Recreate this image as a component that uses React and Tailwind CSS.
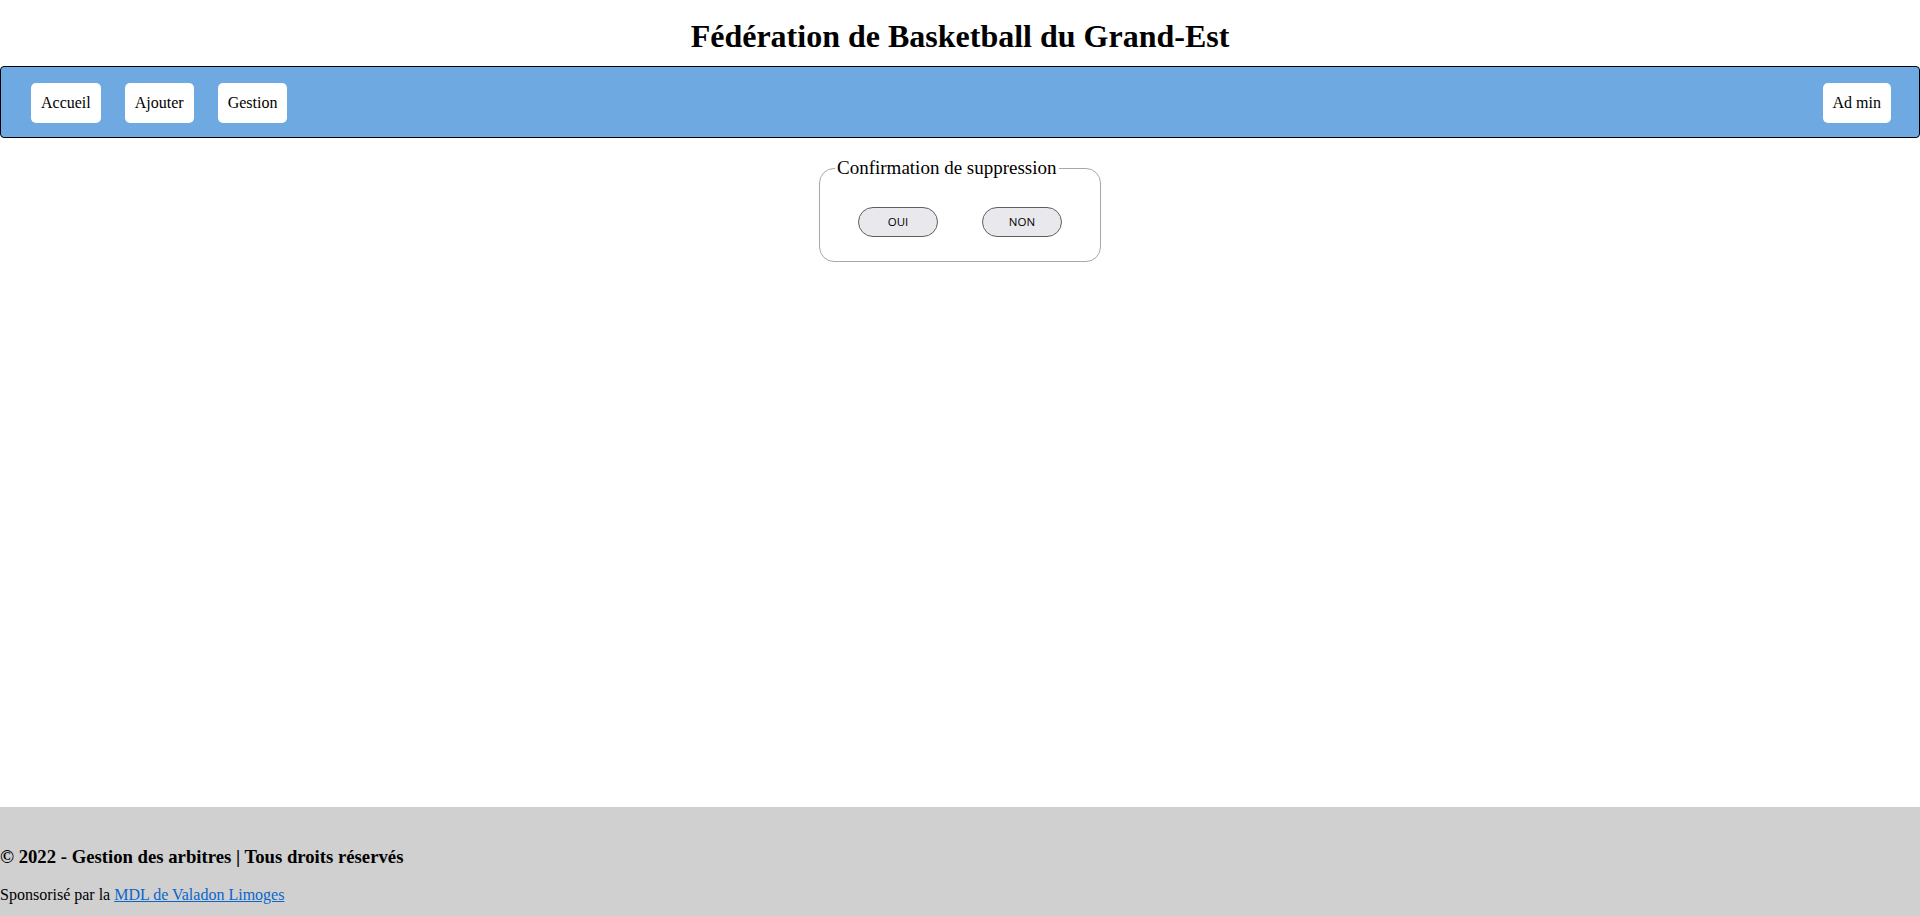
export default function App() {
  const serif = { fontFamily: '"Liberation Serif", "Times New Roman", serif' };
  const navBtn =
    "h-[40px] px-[10px] flex items-center bg-white rounded-[5px] text-[16px] text-black leading-none";
  return (
    <div className="min-h-screen flex flex-col bg-white text-black" style={serif}>
      <h1 className="mt-[18px] text-center text-[32px] leading-[36px] font-bold">
        Fédération de Basketball du Grand-Est
      </h1>
      <nav className="mt-[12px] border border-black rounded-[4px] bg-[#6fa9e1] flex items-start justify-between pl-[30px] pr-[28px] pt-[16px] pb-[14px]">
        <div className="flex items-center gap-[24px]">
          <a className={navBtn} href="#">Accueil</a>
          <a className={navBtn} href="#">Ajouter</a>
          <a className={navBtn} href="#">Gestion</a>
        </div>
        <a className={navBtn} href="#">Ad min</a>
      </nav>
      <main className="flex-1">
        <fieldset className="mx-auto mt-[16px] w-[282px] border border-[#a8a8a8] rounded-[15px] px-[15px] pt-[24px] pb-[24px]">
          <legend className="px-[2px] text-[19px]">Confirmation de suppression</legend>
          <div className="flex justify-center gap-[44px]">
            <button
              className="w-[80px] h-[30px] rounded-full border border-[#5f5f5f] bg-[#e9e9ed] text-[11.5px] text-black flex items-center justify-center"
              style={{ fontFamily: '"Open Sans", "Noto Sans", sans-serif' }}
            >
              OUI
            </button>
            <button
              className="w-[80px] h-[30px] rounded-full border border-[#5f5f5f] bg-[#e9e9ed] text-[11.5px] text-black flex items-center justify-center"
              style={{ fontFamily: '"Open Sans", "Noto Sans", sans-serif' }}
            >
              NON
            </button>
          </div>
        </fieldset>
      </main>
      <footer className="h-[109px] bg-[#d0d0d0] pt-[39px]">
        <h3 className="text-[18.72px] leading-[22px] font-bold">
          © 2022 - Gestion des arbitres | Tous droits réservés
        </h3>
        <p className="mt-[18px] text-[16px] leading-[18px]">
          Sponsorisé par la{" "}
          <a href="#" className="text-[#0a66c8] underline">
            MDL de Valadon Limoges
          </a>
        </p>
      </footer>
    </div>
  );
}
